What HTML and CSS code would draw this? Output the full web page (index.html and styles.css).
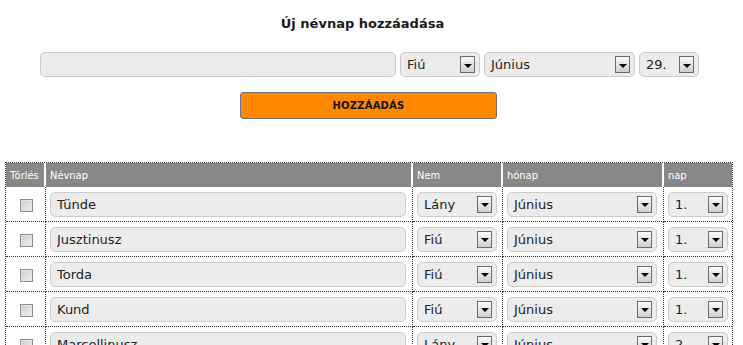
FILE: index.html
```html
<!DOCTYPE html>
<html lang="hu">
<head>
<meta charset="utf-8">
<title>Névnapok</title>
<link rel="stylesheet" href="styles.css">
</head>
<body>
<div class="add-box">
  <h1 class="title">Új névnap hozzáadása</h1>
  <div class="add-row">
    <input class="field field-name-top" type="text" value="" spellcheck="false">
    <div class="sel sel-sex"><span>Fiú</span><span class="arrow"><span class="tri"></span></span></div>
    <div class="sel sel-month-top"><span>Június</span><span class="arrow"><span class="tri"></span></span></div>
    <div class="sel sel-day"><span>29.</span><span class="arrow"><span class="tri"></span></span></div>
  </div>
  <button class="btn" type="button">HOZZÁADÁS</button>
</div>

<table class="list">
  <thead>
    <tr>
      <th class="c-del">Törlés</th>
      <th class="c-name">Névnap</th>
      <th class="c-sex">Nem</th>
      <th class="c-month">hónap</th>
      <th class="c-day">nap</th>
    </tr>
  </thead>
  <tbody>
    <tr>
      <td class="c-del"><input class="chk" type="checkbox"></td>
      <td><input class="field field-name" type="text" value="Tünde" spellcheck="false"></td>
      <td><div class="sel sel-sex"><span>Lány</span><span class="arrow"><span class="tri"></span></span></div></td>
      <td><div class="sel sel-month"><span>Június</span><span class="arrow"><span class="tri"></span></span></div></td>
      <td><div class="sel sel-day"><span>1.</span><span class="arrow"><span class="tri"></span></span></div></td>
    </tr>
    <tr>
      <td class="c-del"><input class="chk" type="checkbox"></td>
      <td><input class="field field-name" type="text" value="Jusztinusz" spellcheck="false"></td>
      <td><div class="sel sel-sex"><span>Fiú</span><span class="arrow"><span class="tri"></span></span></div></td>
      <td><div class="sel sel-month"><span>Június</span><span class="arrow"><span class="tri"></span></span></div></td>
      <td><div class="sel sel-day"><span>1.</span><span class="arrow"><span class="tri"></span></span></div></td>
    </tr>
    <tr>
      <td class="c-del"><input class="chk" type="checkbox"></td>
      <td><input class="field field-name" type="text" value="Torda" spellcheck="false"></td>
      <td><div class="sel sel-sex"><span>Fiú</span><span class="arrow"><span class="tri"></span></span></div></td>
      <td><div class="sel sel-month"><span>Június</span><span class="arrow"><span class="tri"></span></span></div></td>
      <td><div class="sel sel-day"><span>1.</span><span class="arrow"><span class="tri"></span></span></div></td>
    </tr>
    <tr>
      <td class="c-del"><input class="chk" type="checkbox"></td>
      <td><input class="field field-name" type="text" value="Kund" spellcheck="false"></td>
      <td><div class="sel sel-sex"><span>Fiú</span><span class="arrow"><span class="tri"></span></span></div></td>
      <td><div class="sel sel-month"><span>Június</span><span class="arrow"><span class="tri"></span></span></div></td>
      <td><div class="sel sel-day"><span>1.</span><span class="arrow"><span class="tri"></span></span></div></td>
    </tr>
    <tr>
      <td class="c-del"><input class="chk" type="checkbox"></td>
      <td><input class="field field-name" type="text" value="Marcellinusz" spellcheck="false"></td>
      <td><div class="sel sel-sex"><span>Lány</span><span class="arrow"><span class="tri"></span></span></div></td>
      <td><div class="sel sel-month"><span>Június</span><span class="arrow"><span class="tri"></span></span></div></td>
      <td><div class="sel sel-day"><span>2.</span><span class="arrow"><span class="tri"></span></span></div></td>
    </tr>
  </tbody>
</table>
</body>
</html>
```

FILE: styles.css
```css
html, body {
  margin: 0;
  padding: 0;
  background: #fff;
}

body {
  font-family: "DejaVu Sans", Verdana, sans-serif;
  color: #222;
}

.add-box {
  padding-top: 16px;
}

.title {
  margin: 0;
  padding-right: 18px;
  text-align: center;
  font-size: 13px;
  line-height: 16px;
  font-weight: bold;
  color: #1a1a1a;
}

.add-row {
  display: flex;
  gap: 4px;
  margin-top: 20px;
  padding-left: 40px;
}

.field {
  box-sizing: border-box;
  height: 25px;
  margin: 0;
  padding: 0 6px;
  border: 1px solid #cbcbcb;
  border-radius: 5px;
  background: #ececec;
  font-family: "DejaVu Sans", Verdana, sans-serif;
  font-size: 13px;
  color: #222;
  outline: none;
}

.field-name-top {
  width: 356px;
}

.field-name {
  display: block;
  width: 356px;
}

.sel {
  box-sizing: border-box;
  display: flex;
  align-items: center;
  justify-content: space-between;
  height: 25px;
  padding: 0 4px 0 6px;
  border: 1px solid #cbcbcb;
  border-radius: 5px;
  background: #ececec;
  font-size: 13px;
  color: #222;
}

.sel-sex { width: 80px; }
.sel-month-top { width: 151px; }
.sel-month { width: 150px; }
.sel-day { width: 60px; }

.arrow {
  box-sizing: border-box;
  display: flex;
  align-items: center;
  justify-content: center;
  width: 15px;
  height: 17px;
  border: 1px solid #6b6b6b;
  background: linear-gradient(#fbfbfb, #cfcfcf);
}

.tri {
  width: 0;
  height: 0;
  margin-top: 2px;
  border-left: 4px solid transparent;
  border-right: 4px solid transparent;
  border-top: 4px solid #000;
}

.btn {
  display: block;
  box-sizing: border-box;
  width: 257px;
  height: 27px;
  margin: 15px 0 0 240px;
  padding: 0;
  border: 1px solid #707070;
  border-radius: 3px;
  background: #ff8800;
  font-family: "DejaVu Sans", Verdana, sans-serif;
  font-size: 10px;
  font-weight: bold;
  color: #111;
  letter-spacing: 0.2px;
}

.list {
  box-sizing: border-box;
  width: 728px;
  margin: 43px 0 0 5px;
  table-layout: fixed;
  border-collapse: separate;
  border-spacing: 0;
  border: 1px dotted #333;
}

.list th {
  box-sizing: border-box;
  height: 24px;
  padding: 0 4px;
  background: #888;
  border-right: 2px solid #fff;
  color: #fff;
  font-family: "DejaVu Sans Condensed", "DejaVu Sans", sans-serif;
  font-size: 11px;
  font-weight: normal;
  text-align: left;
  vertical-align: middle;
}

.list th:last-child {
  border-right: none;
}

.list .c-del { width: 40px; }
.list .c-name { width: 367px; }
.list .c-sex { width: 90px; }
.list .c-month { width: 161px; }
.list .c-day { width: 68px; }

.list td {
  box-sizing: border-box;
  height: 35px;
  padding: 0 4px;
  border-right: 1px dotted #333;
  border-bottom: 1px dotted #333;
  vertical-align: middle;
}

.list td:last-child {
  border-right: none;
}

.list td.c-del {
  text-align: center;
  padding: 0 0 0 2px;
}

.chk {
  appearance: none;
  -webkit-appearance: none;
  display: inline-block;
  box-sizing: border-box;
  width: 13px;
  height: 13px;
  margin: 0;
  vertical-align: middle;
  border: 1px solid #8c8c8c;
  background: linear-gradient(135deg, #c9c9c9, #f3f3f3);
  box-shadow: inset 0 0 0 1px #e6e6e6;
}
```
